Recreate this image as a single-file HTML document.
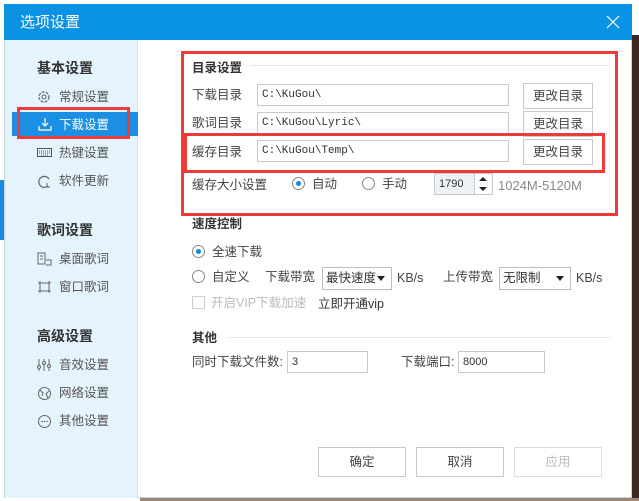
<!DOCTYPE html>
<html><head><meta charset="utf-8"><style>
*{margin:0;padding:0;box-sizing:border-box}
body{width:639px;height:501px;position:relative;overflow:hidden;background:#fff;font-family:"Liberation Sans","Noto Sans CJK SC",sans-serif;font-size:12px;color:#333}
.a{position:absolute;white-space:nowrap;line-height:15px}
.dlg{position:absolute;left:4px;top:4px;width:628px;height:494px;background:#fff;border:1px solid #c8d4dc}
.tb{position:absolute;left:4px;top:4px;width:628px;height:36px;background:#0a92e4}
.side{position:absolute;left:5px;top:40px;width:133px;height:458px;background:#e5f3fc;border-right:1px solid #d8e6ee}
.h{font-weight:bold;font-size:14px;color:#333}
.it{font-size:12.5px;color:#555}
.inp{position:absolute;border:1px solid #c9c9c9;background:#fff;font-family:"Liberation Mono",monospace;font-size:11px;padding-left:4px;line-height:20px}
.btn{position:absolute;border:1px solid #c9c9c9;background:#fff;text-align:center;font-size:12.5px;color:#444}
.red{position:absolute;border:3px solid #f03a3a}
.rad{position:absolute;width:13px;height:13px;border:1px solid #888;border-radius:50%;background:#fff}
.rad.on::after{content:"";position:absolute;left:3px;top:3px;width:5px;height:5px;border-radius:50%;background:#0a8de0}
.sel{position:absolute;border:1px solid #bdbdbd;background:#fff;font-size:12.5px;padding-left:3px;line-height:20px}
.sel::after{content:"";position:absolute;right:6px;top:8px;border:4px solid transparent;border-top:5px solid #222}
.ln{position:absolute;height:1px;background:#e6e6e6}
</style></head><body>
<div class="a" style="left:0;top:180px;width:5px;height:60px;background:#1e88e5"></div>
<div class="a" style="left:632px;top:35px;width:7px;height:466px;background:#3a2a22"></div>
<div class="a" style="left:140px;top:498px;width:499px;height:3px;background:#9a8676"></div>
<div class="dlg"></div>
<div class="tb"></div>
<div class="a" style="left:20px;top:14px;font-size:15px;line-height:17px;color:#fff">选项设置</div>
<svg class="a" style="left:606px;top:15px" width="14" height="14"><path d="M1 1L13 13M13 1L1 13" stroke="#fff" stroke-width="1.2"/></svg>
<div class="side"></div>
<div class="a" style="left:12px;top:112px;width:126px;height:24px;background:#1a8fe3"></div>
<div class="red" style="left:17px;top:107px;width:113px;height:32px"></div>
<div class="a h" style="left:37px;top:61px">基本设置</div>
<svg class="a" style="left:37px;top:90px" width="14" height="14"><circle cx="7" cy="7" r="5" fill="none" stroke="#666" stroke-width="1.2" stroke-dasharray="3 1.2"/><circle cx="7" cy="7" r="2" fill="none" stroke="#666"/></svg>
<div class="a it" style="left:59px;top:90px">常规设置</div>
<svg class="a" style="left:38px;top:117px" width="14" height="14"><path d="M7 1V9M4 6L7 9L10 6M1 9V13H13V9" fill="none" stroke="#fff" stroke-width="1.2"/></svg>
<div class="a it" style="left:59px;top:118px;color:#fff">下载设置</div>
<svg class="a" style="left:37px;top:148px" width="15" height="10"><rect x="0.5" y="0.5" width="14" height="8" fill="none" stroke="#555"/><path d="M2 3H13M2 5H13M4 7H11" stroke="#555" stroke-dasharray="1 1"/></svg>
<div class="a it" style="left:59px;top:146px">热键设置</div>
<svg class="a" style="left:37px;top:174px" width="15" height="15"><path d="M12 5A5.5 5.5 0 1 0 11 12" fill="none" stroke="#666" stroke-width="1.2"/><path d="M10 9V13H13" fill="none" stroke="#666"/></svg>
<div class="a it" style="left:59px;top:174px">软件更新</div>
<div class="a h" style="left:37px;top:223px">歌词设置</div>
<svg class="a" style="left:37px;top:252px" width="15" height="14"><path d="M1 1H8V12H1Z M3 4H6M3 7H6" fill="none" stroke="#666"/><path d="M9 8H14V13H9" fill="none" stroke="#666"/></svg>
<div class="a it" style="left:59px;top:252px">桌面歌词</div>
<svg class="a" style="left:37px;top:280px" width="15" height="14"><path d="M3 1V13M12 1V13M1 3H14M1 11H14" fill="none" stroke="#666"/></svg>
<div class="a it" style="left:59px;top:280px">窗口歌词</div>
<div class="a h" style="left:37px;top:329px">高级设置</div>
<svg class="a" style="left:37px;top:358px" width="15" height="14"><path d="M2 1V13M7 1V13M12 1V13" stroke="#666"/><circle cx="2" cy="9" r="1.5" fill="#e5f3fc" stroke="#666"/><circle cx="7" cy="5" r="1.5" fill="#e5f3fc" stroke="#666"/><circle cx="12" cy="8" r="1.5" fill="#e5f3fc" stroke="#666"/></svg>
<div class="a it" style="left:59px;top:358px">音效设置</div>
<svg class="a" style="left:37px;top:386px" width="15" height="15"><circle cx="7.5" cy="7.5" r="6" fill="none" stroke="#666"/><path d="M3 4L6 7L5 10M12 5L9 8L11 12" fill="none" stroke="#666"/></svg>
<div class="a it" style="left:59px;top:386px">网络设置</div>
<svg class="a" style="left:37px;top:414px" width="15" height="15"><circle cx="7.5" cy="7.5" r="6" fill="none" stroke="#666"/><circle cx="5" cy="7.5" r=".8" fill="#666"/><circle cx="7.5" cy="7.5" r=".8" fill="#666"/><circle cx="10" cy="7.5" r=".8" fill="#666"/></svg>
<div class="a it" style="left:59px;top:414px">其他设置</div>

<div class="a h" style="left:192px;top:61px;font-size:12.5px">目录设置</div>
<div class="ln" style="left:250px;top:65px;width:360px"></div>
<div class="a it" style="left:192px;top:88px;color:#444">下载目录</div>
<div class="inp" style="left:257px;top:84px;width:252px;height:22px">C:\KuGou\</div>
<div class="btn" style="left:523px;top:83px;width:70px;height:26px;line-height:24px">更改目录</div>
<div class="a it" style="left:192px;top:116px;color:#444">歌词目录</div>
<div class="inp" style="left:257px;top:112px;width:252px;height:22px">C:\KuGou\Lyric\</div>
<div class="btn" style="left:523px;top:111px;width:70px;height:26px;line-height:24px">更改目录</div>
<div class="a it" style="left:192px;top:145px;color:#444">缓存目录</div>
<div class="inp" style="left:257px;top:140px;width:252px;height:22px">C:\KuGou\Temp\</div>
<div class="btn" style="left:523px;top:139px;width:70px;height:26px;line-height:24px">更改目录</div>
<div class="a it" style="left:192px;top:178px;color:#444">缓存大小设置</div>
<div class="rad on" style="left:292px;top:177px"></div>
<div class="a it" style="left:312px;top:177px;color:#444">自动</div>
<div class="rad" style="left:362px;top:177px"></div>
<div class="a it" style="left:382px;top:177px;color:#444">手动</div>
<div class="a" style="left:434px;top:173px;width:59px;height:22px;border:1px solid #c9c9c9;background:#eef2f5;font-size:11px;padding:3px 0 0 4px">1790</div>
<div class="a" style="left:474px;top:173px;width:19px;height:22px;border:1px solid #c9c9c9;background:#fff"></div>
<svg class="a" style="left:476px;top:175px" width="14" height="18"><path d="M3 6L7 2L11 6Z M3 12L7 16L11 12Z" fill="#222"/></svg>
<div class="a" style="left:498px;top:178px;font-size:13px;color:#888">1024M-5120M</div>
<div class="red" style="left:181px;top:51px;width:437px;height:165px"></div>
<div class="red" style="left:184px;top:133px;width:421px;height:40px"></div>

<div class="a h" style="left:192px;top:217px;font-size:12.5px">速度控制</div>
<div class="rad on" style="left:192px;top:245px"></div>
<div class="a it" style="left:212px;top:245px;color:#444">全速下载</div>
<div class="rad" style="left:192px;top:270px"></div>
<div class="a it" style="left:212px;top:270px;color:#444">自定义</div>
<div class="a it" style="left:265px;top:270px;color:#444">下载带宽</div>
<div class="sel" style="left:322px;top:267px;width:70px;height:23px">最快速度</div>
<div class="a it" style="left:397px;top:271px;color:#444">KB/s</div>
<div class="a it" style="left:443px;top:270px;color:#444">上传带宽</div>
<div class="sel" style="left:499px;top:267px;width:72px;height:23px">无限制</div>
<div class="a it" style="left:576px;top:271px;color:#444">KB/s</div>
<div class="a" style="left:192px;top:296px;width:13px;height:13px;border:1px solid #d0d0d0;background:#fff"></div>
<div class="a it" style="left:211px;top:296px;color:#bbb">开启VIP下载加速</div>
<div class="a it" style="left:318px;top:297px;color:#333">立即开通vip</div>

<div class="a h" style="left:192px;top:331px;font-size:12.5px">其他</div>
<div class="ln" style="left:228px;top:337px;width:382px"></div>
<div class="a it" style="left:192px;top:355px;color:#444">同时下载文件数:</div>
<div class="inp" style="left:287px;top:351px;width:81px;height:22px;font-family:'Liberation Sans',sans-serif">3</div>
<div class="a it" style="left:401px;top:355px;color:#444">下载端口:</div>
<div class="inp" style="left:458px;top:351px;width:87px;height:22px;font-family:'Liberation Sans',sans-serif">8000</div>

<div class="btn" style="left:318px;top:447px;width:88px;height:30px;line-height:28px">确定</div>
<div class="btn" style="left:416px;top:447px;width:88px;height:30px;line-height:28px">取消</div>
<div class="btn" style="left:514px;top:447px;width:88px;height:30px;line-height:28px;color:#bbb;border-color:#ddd">应用</div>
</body></html>
